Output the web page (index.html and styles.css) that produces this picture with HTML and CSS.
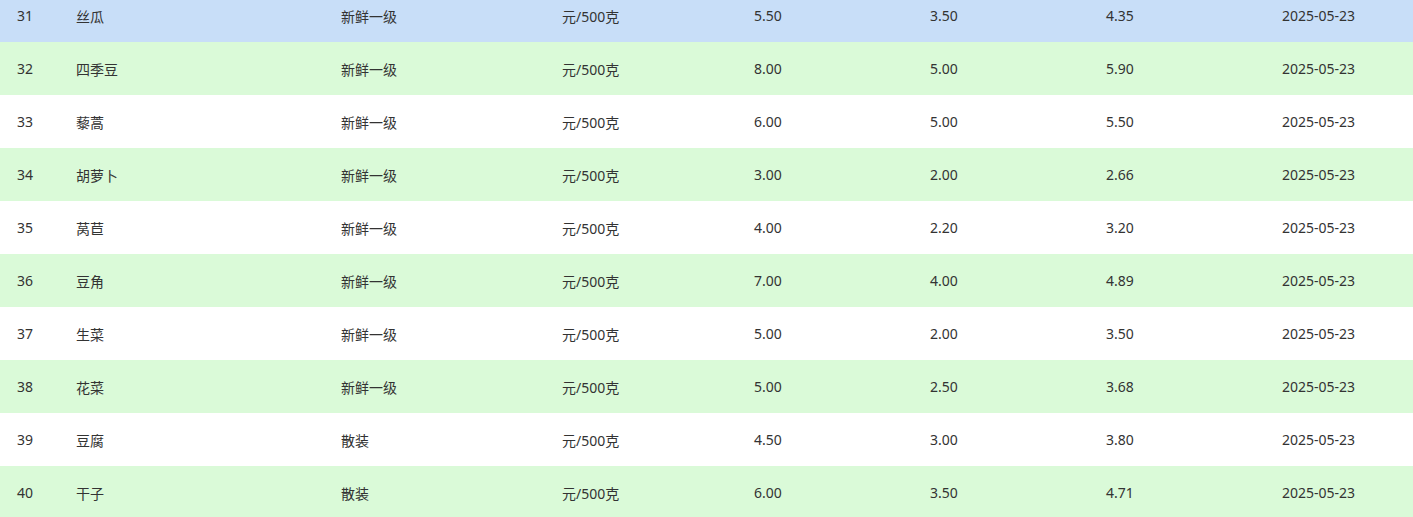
FILE: index.html
```html
<!DOCTYPE html>
<html lang="zh">
<head>
<meta charset="utf-8">
<title>价格表</title>
<link rel="stylesheet" href="styles.css">
</head>
<body>
<div class="table">
  <div class="row active"><span>31</span><span>丝瓜</span><span>新鲜一级</span><span>元/500克</span><span>5.50</span><span>3.50</span><span>4.35</span><span>2025-05-23</span></div>
  <div class="row stripe"><span>32</span><span>四季豆</span><span>新鲜一级</span><span>元/500克</span><span>8.00</span><span>5.00</span><span>5.90</span><span>2025-05-23</span></div>
  <div class="row"><span>33</span><span>藜蒿</span><span>新鲜一级</span><span>元/500克</span><span>6.00</span><span>5.00</span><span>5.50</span><span>2025-05-23</span></div>
  <div class="row stripe"><span>34</span><span>胡萝卜</span><span>新鲜一级</span><span>元/500克</span><span>3.00</span><span>2.00</span><span>2.66</span><span>2025-05-23</span></div>
  <div class="row"><span>35</span><span>莴苣</span><span>新鲜一级</span><span>元/500克</span><span>4.00</span><span>2.20</span><span>3.20</span><span>2025-05-23</span></div>
  <div class="row stripe"><span>36</span><span>豆角</span><span>新鲜一级</span><span>元/500克</span><span>7.00</span><span>4.00</span><span>4.89</span><span>2025-05-23</span></div>
  <div class="row"><span>37</span><span>生菜</span><span>新鲜一级</span><span>元/500克</span><span>5.00</span><span>2.00</span><span>3.50</span><span>2025-05-23</span></div>
  <div class="row stripe"><span>38</span><span>花菜</span><span>新鲜一级</span><span>元/500克</span><span>5.00</span><span>2.50</span><span>3.68</span><span>2025-05-23</span></div>
  <div class="row"><span>39</span><span>豆腐</span><span>散装</span><span>元/500克</span><span>4.50</span><span>3.00</span><span>3.80</span><span>2025-05-23</span></div>
  <div class="row stripe"><span>40</span><span>干子</span><span>散装</span><span>元/500克</span><span>6.00</span><span>3.50</span><span>4.71</span><span>2025-05-23</span></div>
</div>
</body>
</html>
```
FILE: styles.css
```css
html, body {
  margin: 0;
  padding: 0;
  background: #ffffff;
  overflow: hidden;
}
body {
  font-family: "Noto Sans", "Noto Sans CJK SC", sans-serif;
  font-size: 14px;
  color: #333333;
}
.table {
  margin-top: -11px;
}
.row {
  display: grid;
  grid-template-columns: 59px 265px 221px 192px 176px 176px 176px 148px;
  height: 53px;
  align-items: center;
  background: #ffffff;
}
.row span {
  padding-left: 17px;
  white-space: nowrap;
}
.row.stripe {
  background: #dafad8;
}
.row.active {
  background: #c8def8;
}
```
